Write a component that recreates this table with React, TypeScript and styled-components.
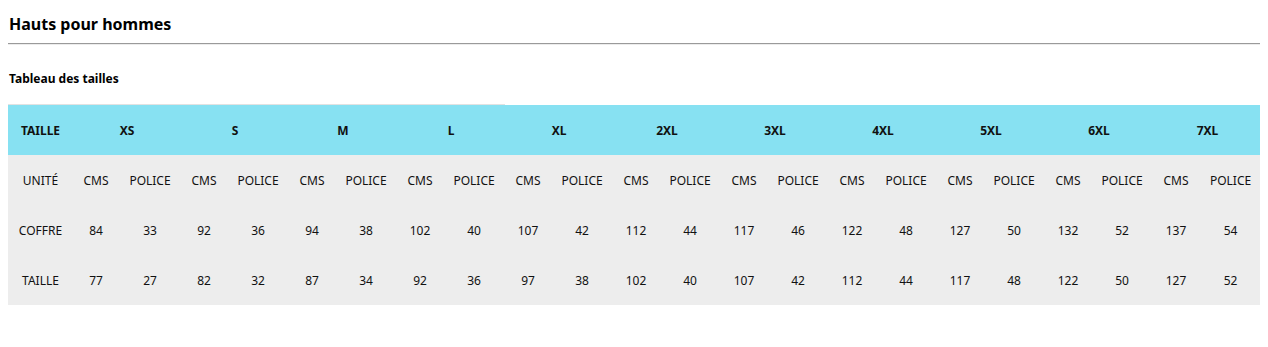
import styled, { createGlobalStyle } from 'styled-components';

const sizes = ['XS', 'S', 'M', 'L', 'XL', '2XL', '3XL', '4XL', '5XL', '6XL', '7XL'];

const rows = [
  { label: 'COFFRE', values: [84, 33, 92, 36, 94, 38, 102, 40, 107, 42, 112, 44, 117, 46, 122, 48, 127, 50, 132, 52, 137, 54] },
  { label: 'TAILLE', values: [77, 27, 82, 32, 87, 34, 92, 36, 97, 38, 102, 40, 107, 42, 112, 44, 117, 48, 122, 50, 127, 52] },
];

const GlobalStyle = createGlobalStyle`
  html, body {
    overflow: hidden;
  }
  body {
    margin: 8px;
    background: #fff;
    color: #000;
    font-family: "Noto Sans", "Open Sans", Arial, sans-serif;
  }
`;

const Page = styled.div`
  margin-right: -8px;
`;

const Title = styled.h2`
  margin: 0;
  padding: 6px 0 9px 1px;
  font-size: 16px;
  font-weight: 700;
  line-height: 20px;
  border-bottom: 1px solid #9a9a9a;
  box-shadow: 0 1px 0 #ececec;
`;

const Subtitle = styled.h4`
  margin: 0;
  padding: 26px 0 17px 1px;
  font-size: 12px;
  font-weight: 700;
  line-height: 17px;
`;

const TopRule = styled.div`
  width: 497px;
  height: 1px;
  background: #e2e2e2;
`;

const Table = styled.table`
  width: 1254px;
  table-layout: fixed;
  border-collapse: collapse;
  font-size: 12px;
`;

const Col = styled.col<{ $w: number }>`
  width: ${(p) => p.$w}px;
`;

const HeadRow = styled.tr`
  background: #87e1f2;
`;

const BodyRow = styled.tr`
  background: #ededed;
`;

const Cell = styled.td<{ $bold?: boolean }>`
  height: 50px;
  padding: 0;
  text-align: center;
  vertical-align: middle;
  white-space: nowrap;
  font-weight: ${(p) => (p.$bold ? 700 : 400)};
  color: #111;
`;

const App = () => {
  return (
    <Page>
      <GlobalStyle />
      <Title>Hauts pour hommes</Title>
      <Subtitle>Tableau des tailles</Subtitle>
      <TopRule />
      <Table>
        <colgroup>
          <Col $w={65} />
          {sizes.map((s) => [
            <Col $w={46} key={s + 'c'} />,
            <Col $w={s === '7XL' ? 63 : 62} key={s + 'p'} />,
          ])}
        </colgroup>
        <tbody>
          <HeadRow>
            <Cell $bold>TAILLE</Cell>
            {sizes.map((s) => (
              <Cell $bold colSpan={2} key={s}>{s}</Cell>
            ))}
          </HeadRow>
          <BodyRow>
            <Cell>UNITÉ</Cell>
            {sizes.map((s) => [
              <Cell key={s + 'c'}>CMS</Cell>,
              <Cell key={s + 'p'}>POLICE</Cell>,
            ])}
          </BodyRow>
          {rows.map((row) => (
            <BodyRow key={row.label}>
              <Cell>{row.label}</Cell>
              {row.values.map((v, i) => (
                <Cell key={i}>{v}</Cell>
              ))}
            </BodyRow>
          ))}
        </tbody>
      </Table>
    </Page>
  );
};

export default App;
